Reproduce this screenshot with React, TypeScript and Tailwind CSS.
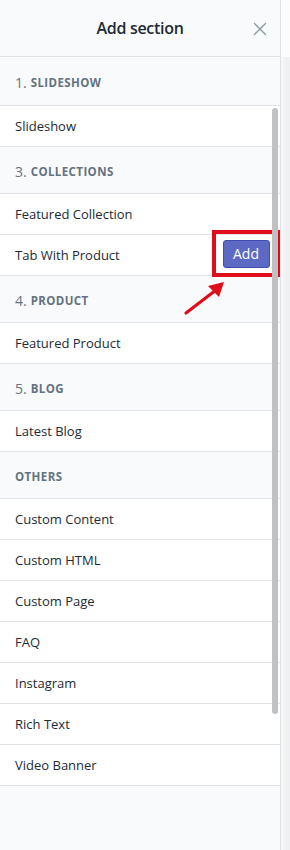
import React from "react";

type Group = { num?: string; label: string; items: string[] };

const groups: Group[] = [
  { num: "1.", label: "Slideshow", items: ["Slideshow"] },
  { num: "3.", label: "Collections", items: ["Featured Collection", "Tab With Product"] },
  { num: "4.", label: "Product", items: ["Featured Product"] },
  { num: "5.", label: "Blog", items: ["Latest Blog"] },
  {
    label: "Others",
    items: ["Custom Content", "Custom HTML", "Custom Page", "FAQ", "Instagram", "Rich Text", "Video Banner"],
  },
];

export default function App() {
  return (
    <div
      className="flex w-[290px] h-[850px] overflow-hidden bg-white"
      style={{ fontFamily: '"Open Sans", "Noto Sans", sans-serif' }}
    >
      <div className="relative flex flex-col w-[281px] h-full bg-[#f9fafb] border-r border-[#dfe3e8]">
        <div className="relative flex items-center justify-center h-[57px] border-b border-[#dfe3e8] shrink-0">
          <span className="text-[16px] font-semibold text-[#212b36] tracking-[-0.3px]">Add section</span>
          <svg
            className="absolute left-[253px] top-[22px]"
            width="14"
            height="14"
            viewBox="0 0 14 14"
            fill="none"
            stroke="#8a9ea6"
            strokeWidth="1.4"
          >
            <path d="M1 1L13 13M13 1L1 13" />
          </svg>
        </div>
        <div className="pt-[1px]">
          {groups.map((g, i) => (
            <div key={g.label}>
              <div
                className={`flex items-center ${i === 0 ? "h-[48px]" : "h-[47px]"} px-[15px] pt-[3px] border-b border-[#dfe3e8] text-[#637381]`}
              >
                {g.num && <span className="text-[14px] mr-[4px] leading-none">{g.num}</span>}
                <span className="text-[11.5px] font-bold uppercase tracking-[0.4px] leading-none">{g.label}</span>
              </div>
              {g.items.map((it) => (
                <div
                  key={it}
                  className="relative flex items-center h-[41px] px-[15px] pt-[1px] bg-white border-b border-[#dfe3e8] text-[13px] text-[#212b36]"
                >
                  {it}
                  {it === "Tab With Product" && (
                    <div className="absolute left-[212px] top-[-5px] w-[68px] h-[47px] border-[4px] border-[#e00d1b] flex items-center justify-center">
                      <div className="flex items-center justify-center w-[47px] h-[28px] rounded-[3px] bg-[#5c6ac4] border border-[#3f4eae] text-white text-[14px]">
                        Add
                      </div>
                    </div>
                  )}
                </div>
              ))}
            </div>
          ))}
        </div>
        <div className="absolute left-[272px] top-[108px] w-[6px] h-[606px] rounded-[3px] bg-[#c1c1c1]" />
        <svg className="absolute left-[180px] top-[276px]" width="50" height="42" viewBox="0 0 50 42">
          <path d="M6 37L36 14" stroke="#e00d1b" strokeWidth="3.2" strokeLinecap="round" />
          <path d="M44 6L28 10L39 21Z" fill="#e00d1b" />
        </svg>
      </div>
      <div className="flex flex-col flex-1">
        <div className="h-[57px] bg-[#fcfcfc]" />
        <div className="flex-1 bg-[#eef0f2] border-l-[3px] border-[#f6f7f8]" />
      </div>
    </div>
  );
}
